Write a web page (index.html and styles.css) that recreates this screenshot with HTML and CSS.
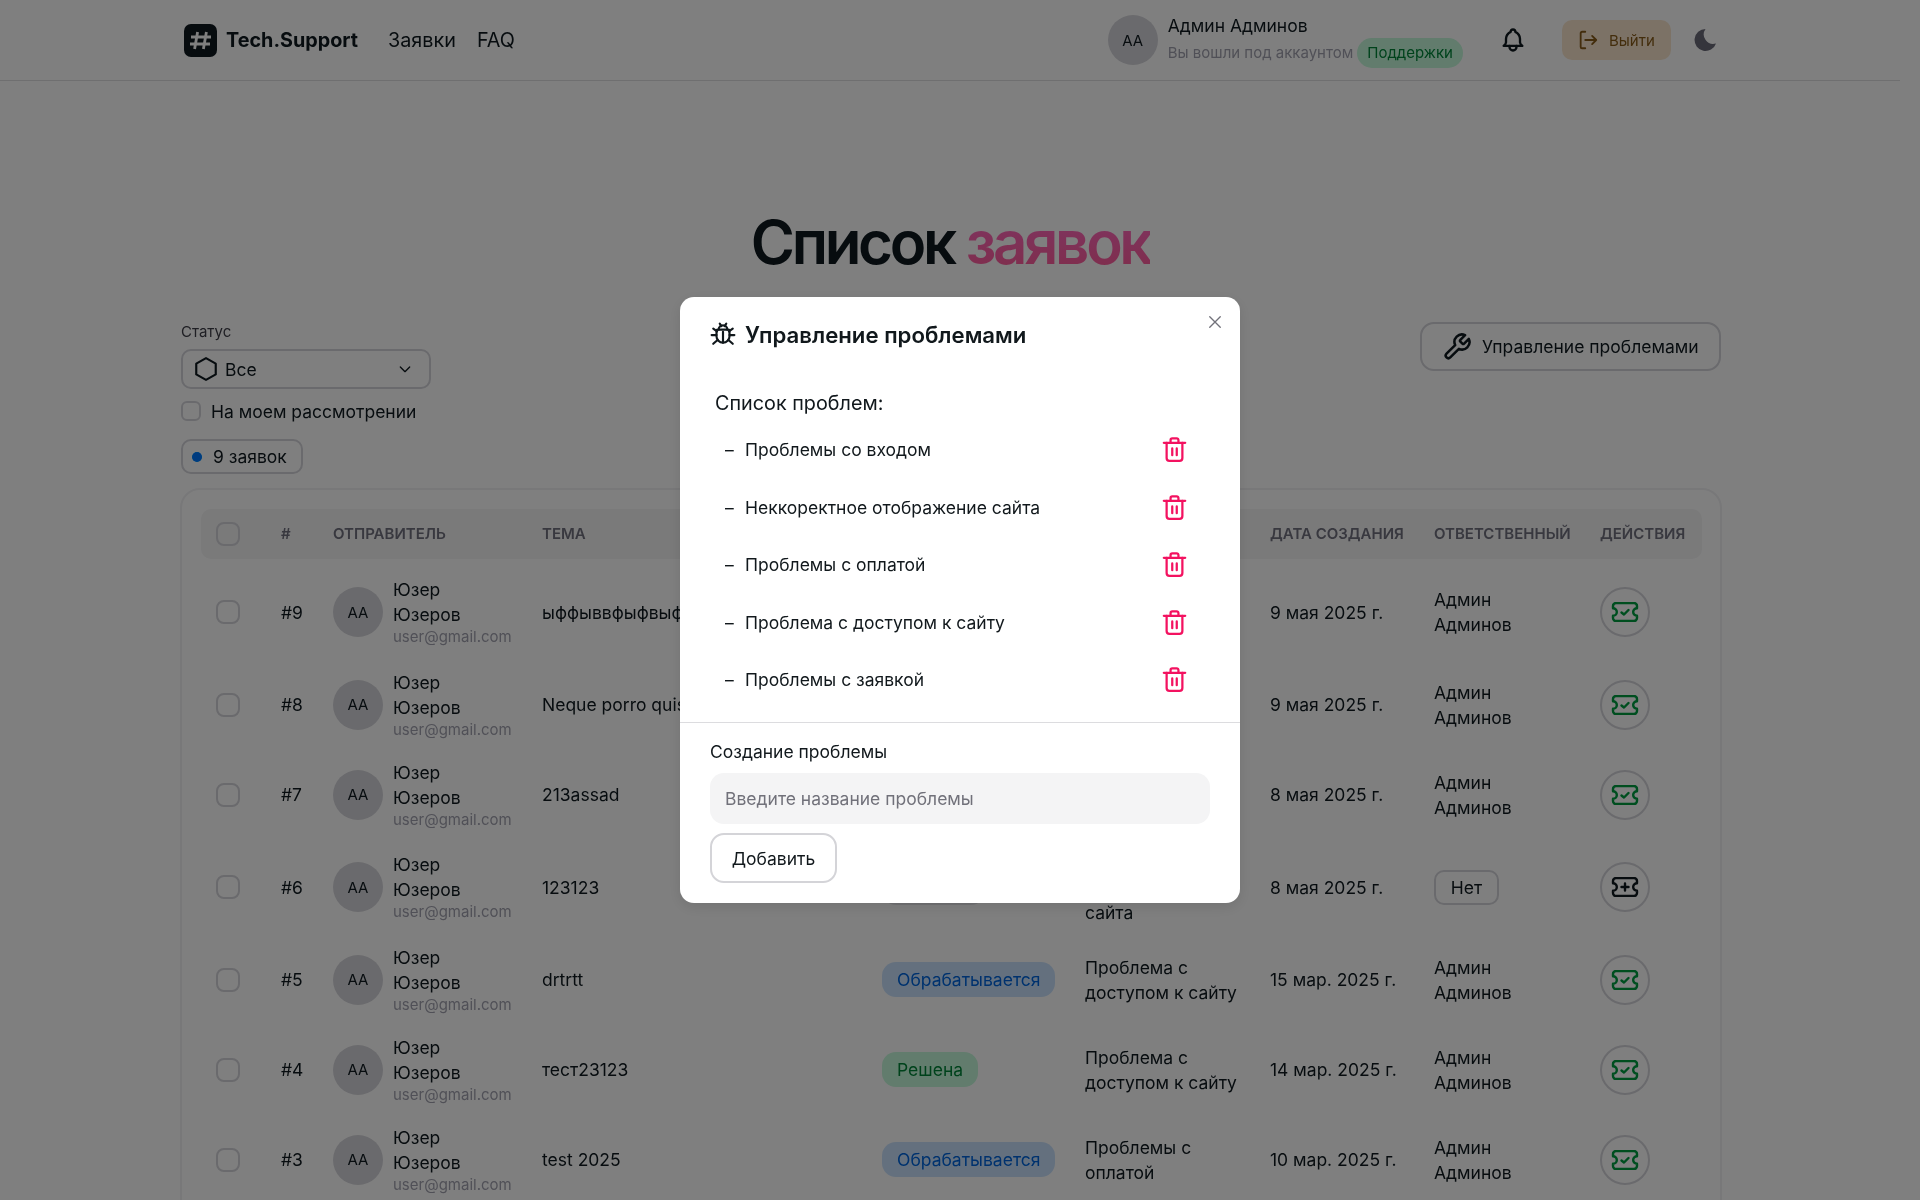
FILE: index.html
```html
<!DOCTYPE html>
<html lang="ru">
<head>
  <meta charset="UTF-8">
  <title>Tech.Support</title>
  <link rel="stylesheet" href="styles.css">
</head>
<body>

<svg class="sprite" xmlns="http://www.w3.org/2000/svg">
  <symbol id="ticket-check" viewBox="0 0 28 20">
    <path d="M2 4a3 3 0 0 1 3-3h18a3 3 0 0 1 3 3v2.2a3.8 3.8 0 0 0 0 7.6V16a3 3 0 0 1-3 3H5a3 3 0 0 1-3-3v-2.2a3.8 3.8 0 0 0 0-7.6z"/>
    <path d="M10.500 10.500l2.500 2 4.500-4.500"/>
  </symbol>
  <symbol id="ticket-plus" viewBox="0 0 28 20">
    <path d="M2 4a3 3 0 0 1 3-3h18a3 3 0 0 1 3 3v2.2a3.8 3.8 0 0 0 0 7.6V16a3 3 0 0 1-3 3H5a3 3 0 0 1-3-3v-2.2a3.8 3.8 0 0 0 0-7.6z"/>
    <path d="M14 6.500v7M10.500 10h7"/>
  </symbol>
  <symbol id="trash" viewBox="0 0 24 24">
    <path d="M2.500 6h19"/>
    <path d="M8.500 6V3.500a1.500 1.500 0 0 1 1.500-1.500h4a1.500 1.500 0 0 1 1.500 1.500V6"/>
    <path d="M5 6v13.500a2.500 2.500 0 0 0 2.500 2.500h9a2.500 2.500 0 0 0 2.500-2.500V6"/>
    <path d="M10 11v6M14 11v6"/>
  </symbol>
</svg>

<div class="page">
  <header class="navbar">
    <a class="brand">
      <svg class="brand-logo" viewBox="0 0 33 33">
        <rect width="33" height="33" rx="7" fill="#11181c"/>
        <path d="M13.600 8l-3 17M22.400 8l-3 17M7 13h20M6 20h20" stroke="#fff" stroke-width="2.800" fill="none"/>
      </svg>
      <span class="brand-name">Tech.Support</span>
    </a>
    <nav class="nav-links">
      <a>Заявки</a>
      <a>FAQ</a>
    </nav>
    <div class="nav-right">
      <div class="avatar">AA</div>
      <div class="nav-user">
        <div class="nav-user-name">Админ Админов</div>
        <div class="nav-user-role">Вы вошли под аккаунтом <span class="chip chip-green chip-role">Поддержки</span></div>
      </div>
      <svg class="nav-bell" viewBox="0 0 24 24" fill="none" stroke="#11181c" stroke-width="2" stroke-linecap="round" stroke-linejoin="round">
        <path d="M10 5a2 2 0 1 1 4 0a7 7 0 0 1 4 6v3a4 4 0 0 0 2 3H4a4 4 0 0 0 2-3v-3a7 7 0 0 1 4-6"/>
        <path d="M9 17v1a3 3 0 0 0 6 0v-1"/>
      </svg>
      <button class="btn-logout">
        <svg viewBox="0 0 24 24" fill="none" stroke="currentColor" stroke-width="2" stroke-linecap="round" stroke-linejoin="round">
          <path d="M9 3H5.500A1.500 1.500 0 0 0 4 4.500v15A1.500 1.500 0 0 0 5.500 21H9"/>
          <path d="M9 12h12M16.500 7.500L21 12l-4.500 4.500"/>
        </svg>
        Выйти
      </button>
      <svg class="nav-moon" viewBox="0 0 24 24" fill="#6a6a74">
        <path d="M12.500 1a11 11 0 1 0 10.500 14.500A9.500 9.500 0 0 1 12.500 1z"/>
      </svg>
    </div>
  </header>

  <main class="content">
    <h1 class="title">Список <span class="title-accent">заявок</span></h1>

    <div class="filters">
      <div class="filters-left">
        <label class="filter-label">Статус</label>
        <div class="select">
          <svg class="select-icon" viewBox="0 0 24 24" fill="none" stroke="#11181c" stroke-width="2" stroke-linejoin="round">
            <path d="M12 2l9 5v10l-9 5-9-5V7z"/>
          </svg>
          <span class="select-value">Все</span>
          <svg class="select-arrow" viewBox="0 0 24 24" fill="none" stroke="#11181c" stroke-width="2" stroke-linecap="round" stroke-linejoin="round">
            <path d="M5 9l7 7 7-7"/>
          </svg>
        </div>
        <label class="check-row"><span class="checkbox checkbox-small"></span>На моем рассмотрении</label>
        <div class="count-chip"><span class="count-dot"></span>9 заявок</div>
      </div>
      <button class="btn-outline">
        <svg viewBox="0 0 24 24" fill="none" stroke="#11181c" stroke-width="2" stroke-linecap="round" stroke-linejoin="round">
          <path d="M14.700 6.300a1 1 0 0 0 0 1.400l1.600 1.600a1 1 0 0 0 1.400 0l3.770-3.770a6 6 0 0 1-7.940 7.940l-6.910 6.910a2.120 2.120 0 0 1-3-3l6.910-6.910a6 6 0 0 1 7.940-7.940l-3.760 3.760z"/>
        </svg>
        Управление проблемами
      </button>
    </div>

    <div class="table-card">
      <table class="tickets">
        <colgroup>
          <col class="col-check"><col class="col-id"><col class="col-sender"><col class="col-subject"><col class="col-status"><col class="col-problem"><col class="col-date"><col class="col-owner"><col class="col-actions">
        </colgroup>
        <thead>
          <tr>
            <th><span class="checkbox"></span></th>
            <th>#</th>
            <th>Отправитель</th>
            <th>Тема</th>
            <th>Статус</th>
            <th>Проблема</th>
            <th>Дата создания</th>
            <th>Ответственный</th>
            <th>Действия</th>
          </tr>
        </thead>
        <tbody>
          <tr>
            <td><span class="checkbox"></span></td>
            <td>#9</td>
            <td><div class="sender"><div class="avatar">AA</div><div><div class="sender-name">Юзер Юзеров</div><div class="sender-mail">user@gmail.com</div></div></div></td>
            <td><div class="subject">ыффыввфыфвыфвыфвыф</div></td>
            <td><span class="chip chip-blue">Обрабатывается</span></td>
            <td>Неккоректное отображение сайта</td>
            <td>9 мая 2025 г.</td>
            <td class="owner">Админ Админов</td>
            <td><button class="btn-round ok"><svg><use href="#ticket-check"/></svg></button></td>
          </tr>
          <tr>
            <td><span class="checkbox"></span></td>
            <td>#8</td>
            <td><div class="sender"><div class="avatar">AA</div><div><div class="sender-name">Юзер Юзеров</div><div class="sender-mail">user@gmail.com</div></div></div></td>
            <td><div class="subject">Neque porro quisquam est</div></td>
            <td><span class="chip chip-blue">Обрабатывается</span></td>
            <td>Проблемы со входом</td>
            <td>9 мая 2025 г.</td>
            <td class="owner">Админ Админов</td>
            <td><button class="btn-round ok"><svg><use href="#ticket-check"/></svg></button></td>
          </tr>
          <tr>
            <td><span class="checkbox"></span></td>
            <td>#7</td>
            <td><div class="sender"><div class="avatar">AA</div><div><div class="sender-name">Юзер Юзеров</div><div class="sender-mail">user@gmail.com</div></div></div></td>
            <td><div class="subject">213assad</div></td>
            <td><span class="chip chip-green">Решена</span></td>
            <td>Проблемы с оплатой</td>
            <td>8 мая 2025 г.</td>
            <td class="owner">Админ Админов</td>
            <td><button class="btn-round ok"><svg><use href="#ticket-check"/></svg></button></td>
          </tr>
          <tr>
            <td><span class="checkbox"></span></td>
            <td>#6</td>
            <td><div class="sender"><div class="avatar">AA</div><div><div class="sender-name">Юзер Юзеров</div><div class="sender-mail">user@gmail.com</div></div></div></td>
            <td><div class="subject">123123</div></td>
            <td><span class="chip chip-gray">Открыта</span></td>
            <td>Неккоректное отображение сайта</td>
            <td>8 мая 2025 г.</td>
            <td><span class="chip-none">Нет</span></td>
            <td><button class="btn-round"><svg><use href="#ticket-plus"/></svg></button></td>
          </tr>
          <tr>
            <td><span class="checkbox"></span></td>
            <td>#5</td>
            <td><div class="sender"><div class="avatar">AA</div><div><div class="sender-name">Юзер Юзеров</div><div class="sender-mail">user@gmail.com</div></div></div></td>
            <td><div class="subject">drtrtt</div></td>
            <td><span class="chip chip-blue">Обрабатывается</span></td>
            <td>Проблема с доступом к сайту</td>
            <td>15 мар. 2025 г.</td>
            <td class="owner">Админ Админов</td>
            <td><button class="btn-round ok"><svg><use href="#ticket-check"/></svg></button></td>
          </tr>
          <tr>
            <td><span class="checkbox"></span></td>
            <td>#4</td>
            <td><div class="sender"><div class="avatar">AA</div><div><div class="sender-name">Юзер Юзеров</div><div class="sender-mail">user@gmail.com</div></div></div></td>
            <td><div class="subject">тест23123</div></td>
            <td><span class="chip chip-green">Решена</span></td>
            <td>Проблема с доступом к сайту</td>
            <td>14 мар. 2025 г.</td>
            <td class="owner">Админ Админов</td>
            <td><button class="btn-round ok"><svg><use href="#ticket-check"/></svg></button></td>
          </tr>
          <tr>
            <td><span class="checkbox"></span></td>
            <td>#3</td>
            <td><div class="sender"><div class="avatar">AA</div><div><div class="sender-name">Юзер Юзеров</div><div class="sender-mail">user@gmail.com</div></div></div></td>
            <td><div class="subject">test 2025</div></td>
            <td><span class="chip chip-blue">Обрабатывается</span></td>
            <td>Проблемы с оплатой</td>
            <td>10 мар. 2025 г.</td>
            <td class="owner">Админ Админов</td>
            <td><button class="btn-round ok"><svg><use href="#ticket-check"/></svg></button></td>
          </tr>
        </tbody>
      </table>
    </div>
  </main>
</div>

<div class="overlay">
  <section class="modal">
    <svg class="modal-close" viewBox="0 0 24 24" fill="none" stroke="#71717a" stroke-width="1.800" stroke-linecap="round">
      <path d="M5 5l14 14M19 5L5 19"/>
    </svg>
    <h2 class="modal-title">
      <svg viewBox="0 0 24 24" fill="none" stroke="#11181c" stroke-width="2" stroke-linecap="round" stroke-linejoin="round">
        <path d="M7 8h10a1 1 0 0 1 1 1v5a6 6 0 0 1-12 0V9a1 1 0 0 1 1-1z"/>
        <path d="M8 8a4 4 0 0 1 8 0M9 2.500l1.500 2.200M15 2.500l-1.500 2.200M12 10v10"/>
        <path d="M6 13H1.500M18 13h4.500M6.500 9.500L3 7M17.500 9.500L21 7M7 17.500L3 21M17 17.500l4 3.500"/>
      </svg>
      Управление проблемами
    </h2>
    <div class="problems">
      <div class="problems-title">Список проблем:</div>
      <ul class="problem-list">
        <li><span class="problem-name">Проблемы со входом</span><svg class="trash"><use href="#trash"/></svg></li>
        <li><span class="problem-name">Неккоректное отображение сайта</span><svg class="trash"><use href="#trash"/></svg></li>
        <li><span class="problem-name">Проблемы с оплатой</span><svg class="trash"><use href="#trash"/></svg></li>
        <li><span class="problem-name">Проблема с доступом к сайту</span><svg class="trash"><use href="#trash"/></svg></li>
        <li><span class="problem-name">Проблемы с заявкой</span><svg class="trash"><use href="#trash"/></svg></li>
      </ul>
    </div>
    <div class="modal-footer">
      <label class="create-label">Создание проблемы</label>
      <input class="create-input" type="text" placeholder="Введите название проблемы">
      <button class="btn-add">Добавить</button>
    </div>
  </section>
</div>

</body>
</html>
```

FILE: styles.css
```css
* { box-sizing: border-box; }
html, body { height: 1200px; overflow: hidden; }
body { margin: 0; background: #fff; color: #11181c; font-family: Inter, "Noto Sans", sans-serif; font-size: 17.500px; }
button { font-family: inherit; color: inherit; background: none; cursor: pointer; }
.sprite { display: none; }
.page { width: 1900px; }

/* navbar */
.navbar { display: flex; align-items: center; height: 81px; padding: 0 183px 0 184px; border-bottom: 1px solid #dedee0; }
.brand { display: flex; align-items: center; gap: 9px; }
.brand-logo { width: 33px; height: 33px; }
.brand-name { font-size: 19.800px; font-weight: 700; }
.nav-links { display: flex; gap: 21px; margin-left: 30px; font-size: 19.800px; }
.nav-right { display: flex; align-items: center; margin-left: auto; }
.avatar { flex: none; display: flex; align-items: center; justify-content: center; width: 50px; height: 50px; border-radius: 50%; background: #d4d4d8; font-size: 15px; }
.nav-user { margin-left: 10px; }
.nav-user-name { font-size: 17.500px; line-height: 22px; margin-top: 2px; }
.nav-user-role { display: flex; align-items: center; gap: 4px; font-size: 15px; color: #a1a1aa; height: 30px; margin-top: 1px; }
.nav-bell { width: 28px; height: 28px; margin-left: 36px; }
.btn-logout { display: flex; align-items: center; gap: 10px; width: 109px; height: 40px; margin-left: 35px; padding: 0 15px; border: 0; border-radius: 10px; background: #f3e6d6; color: #7a5c30; font-size: 15px; }
.btn-logout svg { width: 22px; height: 22px; }
.nav-moon { width: 24px; height: 24px; margin-left: 22px; }

/* chips */
.chip { display: inline-flex; align-items: center; height: 35px; padding: 0 15px; border-radius: 14px; font-size: 17.500px; white-space: nowrap; }
.chip-role { height: 30px; padding: 0 10px; border-radius: 15px; font-size: 15px; }
.chip-green { background: #d1f4e0; color: #207a46; }
.chip-blue { background: #d0e0f2; color: #1a5fb0; }
.chip-gray { background: #e4e4e7; color: #3f3f46; }
.chip-none { display: inline-flex; align-items: center; justify-content: center; width: 65px; height: 35px; border: 2px solid #d4d4d8; border-radius: 10px; }

/* title and filters */
.content { padding: 0 179px 0 180px; }
.title { margin: 130px 0 0 0; height: 62px; font-size: 60px; line-height: 62px; font-weight: 600; letter-spacing: -3.300px; text-align: center; }
.title-accent { background: linear-gradient(180deg, #f07ab8, #e0688f); -webkit-background-clip: text; background-clip: text; color: transparent; }
.filters { display: flex; justify-content: space-between; align-items: flex-start; margin-top: 15px; height: 199.500px; }
.filters-left { display: flex; flex-direction: column; align-items: flex-start; padding-top: 34px; padding-left: 1px; }
.filter-label { font-size: 15px; line-height: 20px; color: #3f3f46; }
.select { display: flex; align-items: center; width: 250px; height: 40px; margin-top: 7px; padding: 0 16px 0 10px; border: 2px solid #d4d4d8; border-radius: 10px; }
.select-icon { width: 26px; height: 26px; }
.select-value { margin-left: 6px; }
.select-arrow { width: 16px; height: 16px; margin-left: auto; }
.check-row { display: flex; align-items: center; gap: 10px; margin-top: 10px; height: 24px; }
.checkbox { display: block; width: 24px; height: 24px; border: 2px solid #d4d4d8; border-radius: 8px; }
.checkbox-small { width: 20px; height: 20px; border-radius: 6px; }
.count-chip { display: flex; align-items: center; gap: 11px; width: 122px; height: 35px; margin-top: 16px; padding-left: 9px; border: 2px solid #d4d4d8; border-radius: 10px; }
.count-dot { width: 10px; height: 10px; border-radius: 50%; background: #006fee; }
.btn-outline { display: flex; align-items: center; gap: 10px; width: 301px; height: 49px; margin-top: 34px; padding: 0 20px; border: 2px solid #d4d4d8; border-radius: 14px; font-size: 17.500px; white-space: nowrap; }
.btn-outline svg { flex: none; width: 30px; height: 30px; }

/* table */
.table-card { padding: 19px 19px; border: 2px solid #f0f0f2; border-radius: 20px; width: 1542px; }
.tickets { width: 1501px; table-layout: fixed; border-collapse: separate; border-spacing: 0; }
.col-check { width: 68px; }
.col-id { width: 52px; }
.col-sender { width: 209px; }
.col-subject { width: 340px; }
.col-status { width: 203px; }
.col-problem { width: 185px; }
.col-date { width: 164px; }
.col-owner { width: 166px; }
.col-actions { width: 114px; }
.tickets th { height: 50px; padding: 0 12px; background: #f4f4f5; color: #71717a; font-size: 15px; font-weight: 600; text-align: left; text-transform: uppercase; white-space: nowrap; }
.tickets th:first-child { border-radius: 10px 0 0 10px; }
.tickets th:last-child { border-radius: 0 10px 10px 0; }
.tickets tbody::before { content: ""; display: block; height: 6px; }
.tickets td { height: 90px; padding: 10px 12px; line-height: 25px; vertical-align: middle; }
.tickets th:first-child, .tickets td:first-child { padding-left: 15px; padding-right: 0; }
.sender { display: flex; align-items: center; gap: 10px; }
.sender-name { width: 100px; }
.sender-mail { font-size: 15px; line-height: 20px; color: #a1a1aa; white-space: nowrap; }
.subject { white-space: nowrap; }
.owner { padding-right: 60px !important; }
.btn-round { display: flex; align-items: center; justify-content: center; width: 50px; height: 50px; padding: 0; border: 2px solid #d4d4d8; border-radius: 50%; color: #11181c; }
.btn-round.ok { color: #1f8f50; }
.btn-round svg { width: 28px; height: 20px; fill: none; stroke: currentColor; stroke-width: 2.400; stroke-linecap: round; stroke-linejoin: round; }

/* modal */
.overlay { position: fixed; inset: 0; background: rgba(0, 0, 0, 0.5); -webkit-backdrop-filter: saturate(150%); backdrop-filter: saturate(150%); }
.modal { position: absolute; left: 680px; top: 297px; width: 560px; height: 606px; background: #fff; border-radius: 14px; box-shadow: 0 4px 14px rgba(0, 0, 0, 0.1); }
.modal-close { position: absolute; top: 16px; right: 16px; width: 18px; height: 18px; }
.modal-title { display: flex; align-items: center; gap: 9px; margin: 0; padding: 14px 30px 0 30px; height: 60px; font-size: 22.200px; font-weight: 600; }
.modal-title svg { width: 26px; height: 26px; }
.problems { height: 366px; padding: 34px 30px 0 35px; border-bottom: 1px solid #dcdcdf; }
.problems-title { font-size: 19.800px; line-height: 24px; }
.problem-list { list-style: none; margin: 6px 0 0; padding: 0 22px 0 10px; }
.problem-list li { display: flex; align-items: center; justify-content: space-between; height: 57.500px; }
.problem-name { position: relative; padding-left: 20px; }
.problem-name::before { content: "–"; position: absolute; left: 0; top: 0; }
.trash { width: 27px; height: 27px; fill: none; stroke: #f31260; stroke-width: 2; stroke-linecap: round; stroke-linejoin: round; }
.modal-footer { padding: 19px 30px 0; }
.create-label { display: block; line-height: 20px; }
.create-input { display: block; width: 500px; height: 51px; margin-top: 11px; padding: 0 15px; border: 0; border-radius: 14px; background: #f4f4f5; font: inherit; }
.create-input::placeholder { color: #71717a; opacity: 1; }
.btn-add { display: block; width: 127px; height: 50px; margin-top: 9px; border: 2px solid #d4d4d8; border-radius: 14px; font-size: 17.500px; }
```
